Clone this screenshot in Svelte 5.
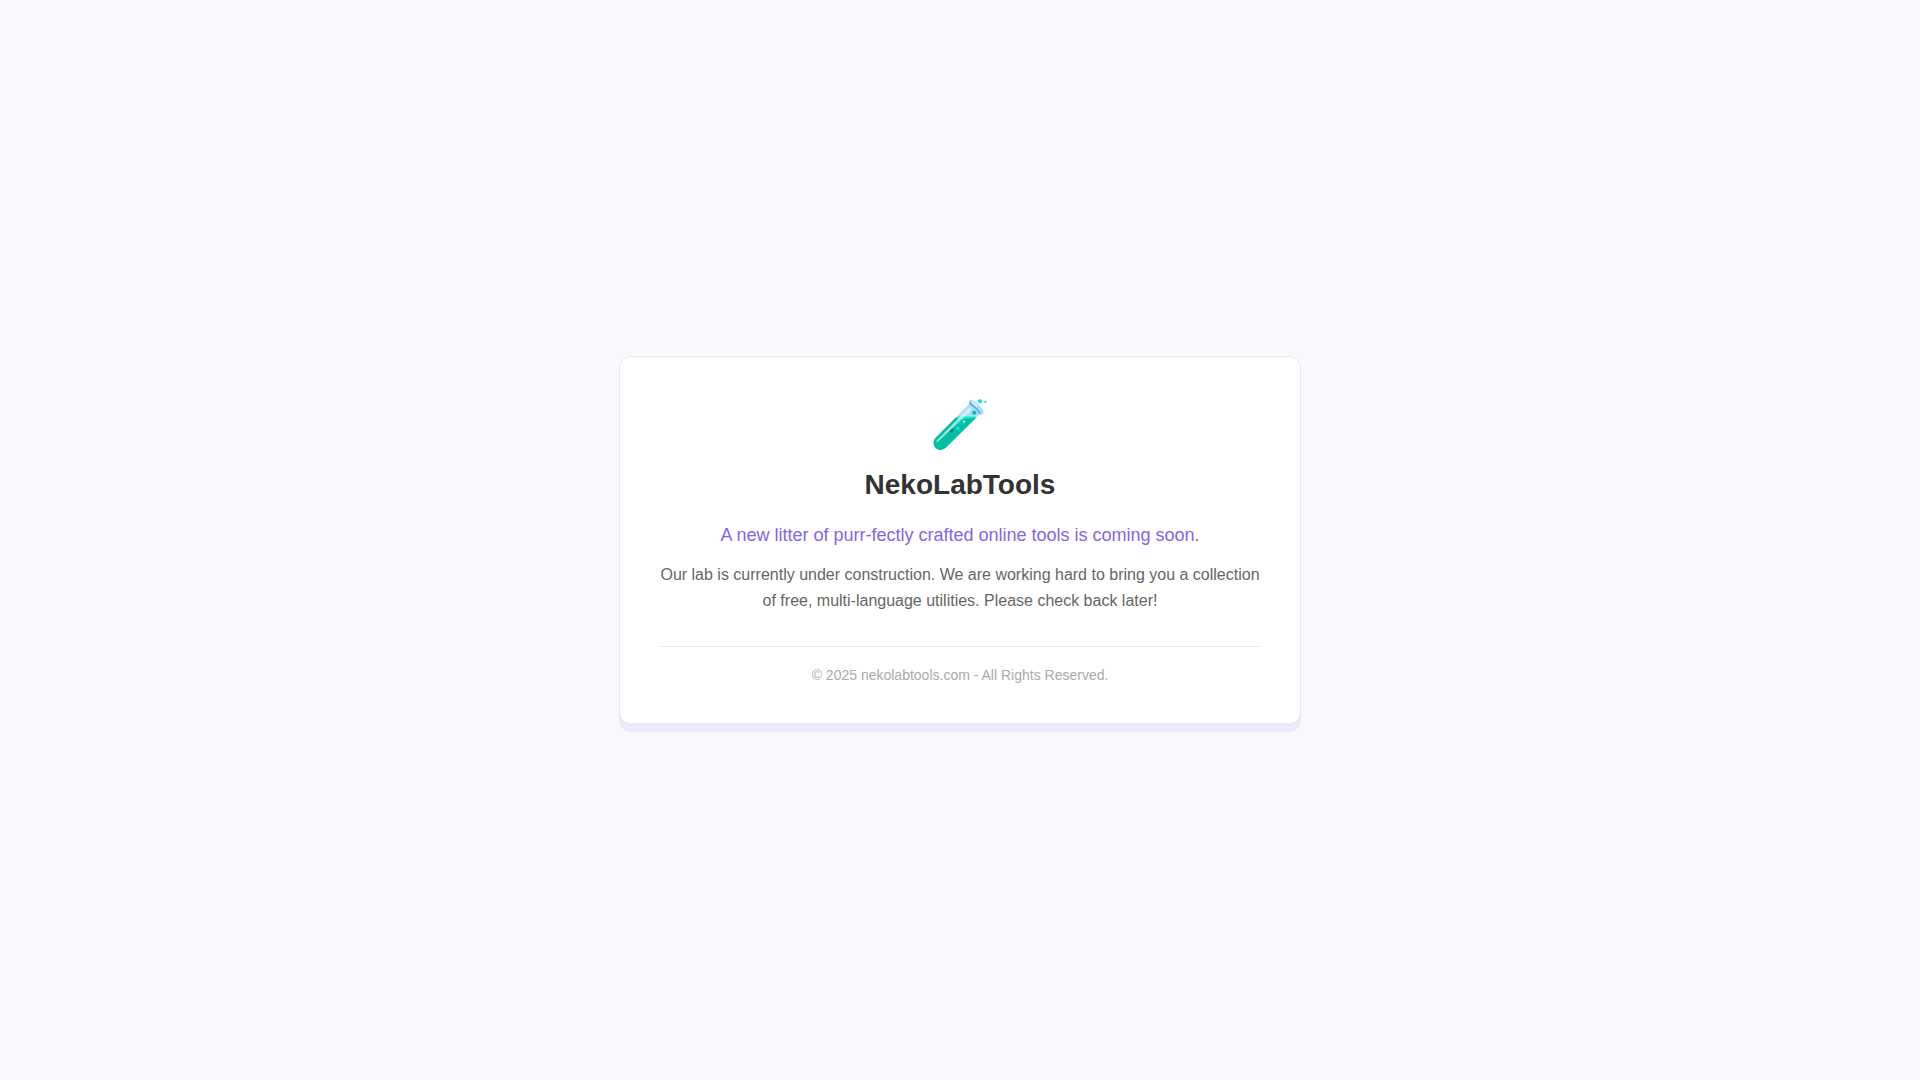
<script lang="ts">
    const siteName = 'NekoLabTools'
    const domain = 'nekolabtools.com'
    const year = 2025
</script>

<svelte:head>
    <title>{siteName}</title>
</svelte:head>

<main>
    <div class="container">
        <div class="logo">🧪</div>
        <h1>{siteName}</h1>
        <p class="tagline">A new litter of purr-fectly crafted online tools is coming soon.</p>
        <p class="description">Our lab is currently under construction. We are working hard to bring you a collection of free, multi-language utilities. Please check back later!</p>
        <footer>&copy; {year} {domain} - All Rights Reserved.</footer>
    </div>
</main>

<style>
    :global(body) {
        background-color: #f9f8fd;
    }

    main {
        display: flex;
        justify-content: center;
        align-items: center;
        min-height: 100vh;
        font-family: "Liberation Sans", Arial, sans-serif;
        text-align: center;
    }

    .container {
        max-width: 600px;
        padding: 40px;
        background-color: #ffffff;
        border: 1px solid #ebebeb;
        border-radius: 12px;
        box-shadow: 0 8px 0 rgba(123, 104, 238, 0.1);
    }

    .logo {
        font-size: 48px;
        line-height: 56px;
        margin-bottom: 16px;
    }

    h1 {
        margin: 0 0 20px;
        color: #333333;
        font-size: 28px;
        line-height: 32px;
    }

    p {
        margin: 0;
    }

    .tagline {
        margin-bottom: 13px;
        color: #7b68ee;
        font-size: 18px;
        line-height: 28px;
    }

    .description {
        color: #666666;
        font-size: 16px;
        line-height: 26px;
    }

    footer {
        margin-top: 32px;
        padding-top: 20px;
        border-top: 1px solid #ebebeb;
        color: #aaaaaa;
        font-size: 14px;
        line-height: 16px;
    }
</style>
